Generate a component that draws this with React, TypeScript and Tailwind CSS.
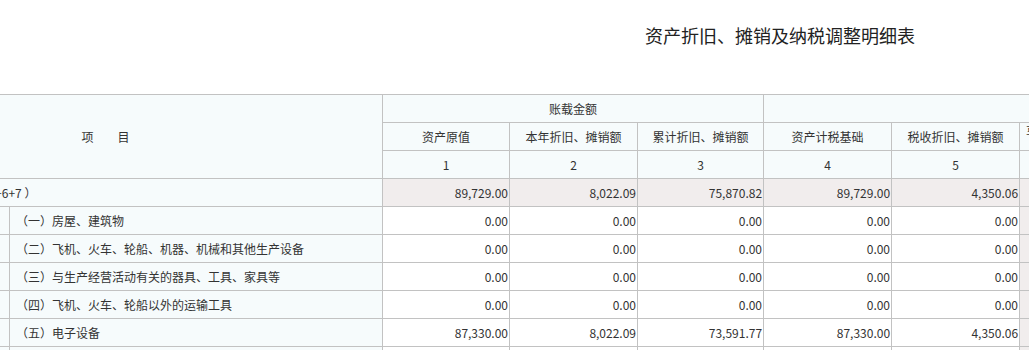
const cyan = 'bg-[#f6fbfc]';
const pink = 'bg-[#f1eded]';

const rows = [
  { label: '（一）房屋、建筑物', v: ['0.00', '0.00', '0.00', '0.00', '0.00', '0.00', '0.00', '0.00'] },
  { label: '（二）飞机、火车、轮船、机器、机械和其他生产设备', v: ['0.00', '0.00', '0.00', '0.00', '0.00', '0.00', '0.00', '0.00'] },
  { label: '（三）与生产经营活动有关的器具、工具、家具等', v: ['0.00', '0.00', '0.00', '0.00', '0.00', '0.00', '0.00', '0.00'] },
  { label: '（四）飞机、火车、轮船以外的运输工具', v: ['0.00', '0.00', '0.00', '0.00', '0.00', '0.00', '0.00', '0.00'] },
  { label: '（五）电子设备', v: ['87,330.00', '8,022.09', '73,591.77', '87,330.00', '4,350.06', '4,350.06', '0.00', '0.00'] },
  { label: '（六）其他', v: ['2,399.00', '0.00', '2,279.05', '2,399.00', '0.00', '0.00', '0.00', '0.00'] },
];

const total = ['89,729.00', '8,022.09', '75,870.82', '89,729.00', '4,350.06', '4,350.06', '0.00', '0.00'];

const taxHeads = [
  '享受加速折旧政策的资产按税收一般规定计算的折旧、摊销额',
  '加速折旧、摊销统计额',
  '累计折旧、摊销额',
];

const cell = 'border border-[#c2c2c2] h-[28px] p-0';

export default function App() {
  return (
    <div className="min-h-screen bg-white font-['Noto_Sans_CJK_SC','Noto_Sans',sans-serif] text-[12px] text-[#333]">
      <h1 className="pl-[645px] pt-[23px] pb-[47px] text-[18px] leading-[24px] font-normal text-[#222]">
        资产折旧、摊销及纳税调整明细表
      </h1>

      <div className="overflow-hidden">
        <table className="-ml-[172px] w-[1617px] table-fixed border-collapse">
          <colgroup>
            <col className="w-[181px]" />
            <col className="w-[373px]" />
            <col className="w-[127px]" />
            <col className="w-[128px]" />
            <col className="w-[126px]" />
            <col className="w-[128px]" />
            <col className="w-[128px]" />
            <col className="w-[150px]" />
            <col className="w-[138px]" />
            <col className="w-[138px]" />
          </colgroup>
          <thead className={cyan}>
            <tr>
              <th colSpan={2} rowSpan={3} className={`${cell} text-center font-normal`}>
                项　　目
              </th>
              <th colSpan={3} className={`${cell} text-center font-normal`}>
                账载金额
              </th>
              <th colSpan={5} className={`${cell} text-center font-normal`}>
                税收金额
              </th>
            </tr>
            <tr>
              {['资产原值', '本年折旧、摊销额', '累计折旧、摊销额', '资产计税基础', '税收折旧、摊销额'].map((t) => (
                <th key={t} className={`${cell} text-center font-normal`}>
                  {t}
                </th>
              ))}
              {taxHeads.map((t) => (
                <th key={t} className={`${cell} align-top font-normal`}>
                  <div className="h-[12px] overflow-hidden pl-[6px] pt-px text-left leading-[14px]">
                    {t}
                  </div>
                </th>
              ))}
            </tr>
            <tr>
              {['1', '2', '3', '4', '5', '6', '7', '8'].map((n) => (
                <th key={n} className={`${cell} text-center font-normal`}>
                  {n}
                </th>
              ))}
            </tr>
          </thead>
          <tbody>
            <tr>
              <td colSpan={2} className={`${cell} ${cyan} pl-[35.5px] whitespace-nowrap`}>
                一、固定资产（2+3+4+5+6+7 ）
              </td>
              {total.map((v, i) => (
                <td key={i} className={`${cell} ${pink} pr-[1px] text-right`}>
                  {v}
                </td>
              ))}
            </tr>
            {rows.map((r) => (
              <tr key={r.label}>
                <td className={`${cell} ${cyan}`} />
                <td className={`${cell} ${cyan} pl-[6px] whitespace-nowrap`}>{r.label}</td>
                {r.v.map((v, i) => (
                  <td
                    key={i}
                    className={`${cell} ${i >= 5 ? pink : 'bg-white'} pr-[1px] text-right`}
                  >
                    {v}
                  </td>
                ))}
              </tr>
            ))}
          </tbody>
        </table>
      </div>
    </div>
  );
}
